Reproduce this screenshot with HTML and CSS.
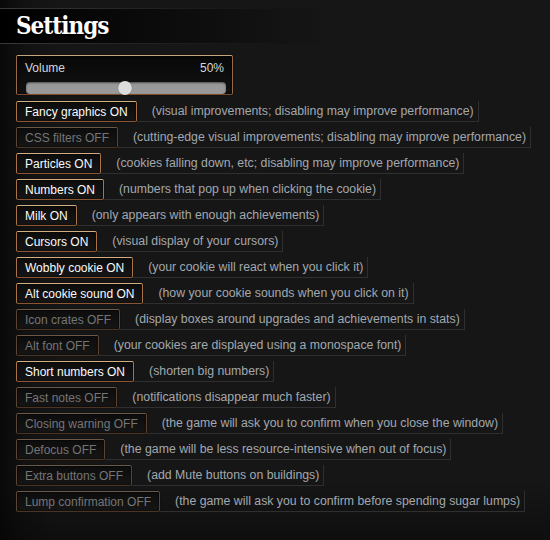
FILE: index.html
```html
<!DOCTYPE html>
<html>
<head>
<meta charset="utf-8">
<link rel="stylesheet" href="styles.css">
</head>
<body>
<div class="page">
  <div class="title-band"><h1 class="title">Settings</h1></div>
  <div class="content">
    <div class="volume">
      <div class="volume-head"><span>Volume</span><span>50%</span></div>
      <div class="track"><div class="thumb"></div></div>
    </div>
    <div class="row"><span class="opt on">Fancy graphics ON</span><span class="label">(visual improvements; disabling may improve performance)</span></div>
    <div class="row"><span class="opt off">CSS filters OFF</span><span class="label">(cutting-edge visual improvements; disabling may improve performance)</span></div>
    <div class="row"><span class="opt on">Particles ON</span><span class="label">(cookies falling down, etc; disabling may improve performance)</span></div>
    <div class="row"><span class="opt on">Numbers ON</span><span class="label">(numbers that pop up when clicking the cookie)</span></div>
    <div class="row"><span class="opt on">Milk ON</span><span class="label">(only appears with enough achievements)</span></div>
    <div class="row"><span class="opt on">Cursors ON</span><span class="label">(visual display of your cursors)</span></div>
    <div class="row"><span class="opt on">Wobbly cookie ON</span><span class="label">(your cookie will react when you click it)</span></div>
    <div class="row"><span class="opt on">Alt cookie sound ON</span><span class="label">(how your cookie sounds when you click on it)</span></div>
    <div class="row"><span class="opt off">Icon crates OFF</span><span class="label">(display boxes around upgrades and achievements in stats)</span></div>
    <div class="row"><span class="opt off">Alt font OFF</span><span class="label">(your cookies are displayed using a monospace font)</span></div>
    <div class="row"><span class="opt on">Short numbers ON</span><span class="label">(shorten big numbers)</span></div>
    <div class="row"><span class="opt off">Fast notes OFF</span><span class="label">(notifications disappear much faster)</span></div>
    <div class="row"><span class="opt off">Closing warning OFF</span><span class="label">(the game will ask you to confirm when you close the window)</span></div>
    <div class="row"><span class="opt off">Defocus OFF</span><span class="label">(the game will be less resource-intensive when out of focus)</span></div>
    <div class="row"><span class="opt off">Extra buttons OFF</span><span class="label">(add Mute buttons on buildings)</span></div>
    <div class="row"><span class="opt off">Lump confirmation OFF</span><span class="label">(the game will ask you to confirm before spending sugar lumps)</span></div>
  </div>
</div>
</body>
</html>
```
FILE: styles.css
```css
html, body {
  margin: 0;
  padding: 0;
}
body {
  width: 550px;
  height: 540px;
  overflow: hidden;
  background-color: #161616;
  background-image:
    linear-gradient(to right, rgba(0,0,0,0.6), rgba(0,0,0,0.2) 25px, rgba(0,0,0,0) 60px),
    linear-gradient(to top, rgba(0,0,0,0.35), rgba(0,0,0,0) 60px);
  font-family: "Liberation Sans", Arial, sans-serif;
}
.page {
  padding-top: 8px;
}
.title-band {
  height: 34px;
  border-top: 1px solid transparent;
  border-bottom: 1px solid transparent;
  background:
    linear-gradient(to right, #3a3a3a, rgba(58,58,58,0) 290px) top / 100% 1px no-repeat,
    linear-gradient(to right, #3a3a3a, rgba(58,58,58,0) 290px) bottom / 100% 1px no-repeat,
    linear-gradient(to right, #000 0px, #050505 60px, rgba(0,0,0,0) 330px);
  background-origin: border-box;
  display: flex;
  align-items: center;
}
.title {
  margin: 0 0 0 16px;
  font-family: "DejaVu Serif Condensed", "DejaVu Serif", serif;
  font-weight: bold;
  font-size: 24px;
  letter-spacing: -1px;
  color: #fff;
  text-shadow: 0 1px 1px #000, 0 0 2px #000;
  line-height: 34px;
}
.content {
  padding: 11px 0 0 16px;
}
.volume {
  width: 215px;
  height: 38px;
  border: 1px solid;
  border-color: #c8a47c #9a6a44 #7e4b2a #9a6a44;
  border-radius: 2px;
  background: linear-gradient(#080808, #121212);
  box-shadow: inset 0 0 3px #000, 0 0 1px #000;
  margin-bottom: 6px;
}
.volume-head {
  display: flex;
  justify-content: space-between;
  font-size: 12px;
  color: #d4d7da;
  padding: 4px 8px 0 8px;
  height: 16px;
  line-height: 16px;
}
.track {
  position: relative;
  margin: 6px 0 0 9px;
  width: 200px;
  height: 12px;
  border-radius: 4px;
  background: #999;
  box-shadow: inset 0 1px 2px rgba(0,0,0,0.5);
}
.thumb {
  position: absolute;
  left: 92px;
  top: -1px;
  width: 14px;
  height: 14px;
  border-radius: 50%;
  background: #dcdcdc;
  box-shadow: 0 0 1px rgba(0,0,0,0.6);
}
.row {
  display: flex;
  height: 21px;
  margin-bottom: 5px;
}
.opt {
  display: flex;
  align-items: center;
  padding: 0 8px;
  border: 1px solid;
  border-radius: 2px;
  font-size: 12px;
  background: linear-gradient(#0c0c0c, #161616);
  box-shadow: inset 0 0 2px #000, 0 0 1px #000;
  white-space: nowrap;
}
.opt.on {
  color: #fafafa;
  border-color: #d2ae82 #a87448 #8a5530 #a87448;
}
.opt.off {
  color: #757575;
  border-color: #6a5848 #5a4535 #4a3525 #5a4535;
}
.label {
  display: flex;
  align-items: center;
  padding: 0 4px 0 15px;
  font-size: 12.3px;
  color: #a2a8ae;
  border-right: 1px solid #2f2f2f;
  border-bottom: 1px solid #2f2f2f;
  white-space: nowrap;
}
```
